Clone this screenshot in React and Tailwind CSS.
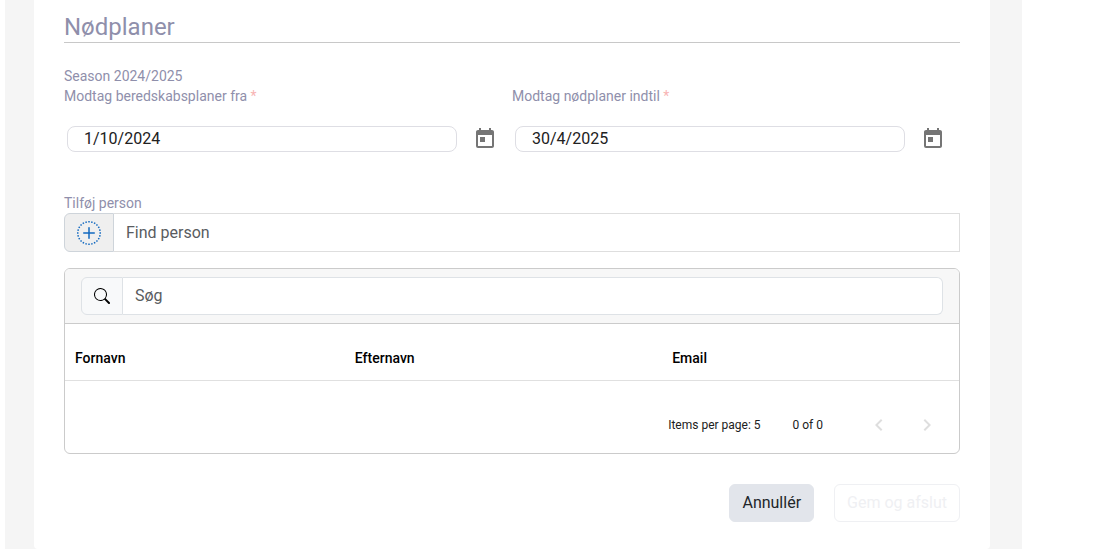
import React, { useState } from "react";
import { BsPlusCircleDotted, BsSearch } from "react-icons/bs";
import { MdChevronLeft, MdChevronRight, MdToday } from "react-icons/md";

const DateField = ({ id, label, value, onChange }) => (
  <div>
    <label htmlFor={id} className="block text-sm leading-5 text-[#8f8fab]">
      {label} <span className="text-[#f8b4b4]">*</span>
    </label>
    <div className="mt-[9px] flex h-12 items-center gap-1 px-[3px]">
      <input
        id={id}
        type="text"
        value={value}
        onChange={(e) => onChange(e.target.value)}
        className="h-[26px] min-w-0 flex-1 rounded-lg border border-[#dedee4] bg-white px-4 pb-0.5 text-base text-[#212121] outline-none"
        required
      />
      <button
        type="button"
        aria-label="Open calendar"
        className="flex size-12 items-center justify-center text-[#757575]"
      >
        <MdToday size={24} />
      </button>
    </div>
  </div>
);

const App = () => {
  const [dates, setDates] = useState({ from: "1/10/2024", to: "30/4/2025" });
  const [person, setPerson] = useState("");
  const [search, setSearch] = useState("");

  return (
    <div className="bg-white pr-[88px] pl-[5px] font-[Roboto,sans-serif]">
      <div className="bg-[#f5f5f5] pr-8 pl-[29px]">
        <main className="rounded-b bg-white px-[30px] pt-3 pb-[27px]">
          <h1 className="border-b border-[#c8c8c8] text-2xl leading-[30px] text-[#8f8fab]">
            Nødplaner
          </h1>

          <form onSubmit={(e) => e.preventDefault()}>
            <p className="mt-[23px] text-sm leading-5 text-[#8f8fab]">
              Season 2024/2025
            </p>
            <div className="grid grid-cols-2">
              <DateField
                id="from"
                label="Modtag beredskabsplaner fra"
                value={dates.from}
                onChange={(from) => setDates({ ...dates, from })}
              />
              <DateField
                id="to"
                label="Modtag nødplaner indtil"
                value={dates.to}
                onChange={(to) => setDates({ ...dates, to })}
              />
            </div>

            {/* Add person */}
            <label
              htmlFor="person"
              className="mt-[30px] block text-sm leading-5 text-[#8f8fab]"
            >
              Tilføj person
            </label>
            <div className="flex h-[39px]">
              <button
                type="button"
                aria-label="Tilføj person"
                className="flex w-[50px] items-center justify-center rounded-l-md border border-[#ced4da] bg-[#efefef] text-[#1269c0]"
              >
                <BsPlusCircleDotted size={24} />
              </button>
              <input
                id="person"
                type="text"
                value={person}
                onChange={(e) => setPerson(e.target.value)}
                placeholder="Find person"
                className="min-w-0 flex-1 border border-l-0 border-[#dedede] px-3 text-base outline-none placeholder:text-[#595c5f]"
              />
            </div>

            {/* Persons */}
            <section className="mt-4 overflow-hidden rounded-md border border-[#cbcbcb]">
              <div className="border-b border-[#cbcbcb] bg-[#f7f7f7] px-4 py-2">
                <div className="flex h-[38px]">
                  <label
                    htmlFor="search"
                    aria-label="Søg"
                    className="flex w-[42px] items-center justify-center rounded-l-md border border-[#dee2e6] bg-[#f8f9fa] text-black"
                  >
                    <BsSearch size={16} />
                  </label>
                  <input
                    id="search"
                    type="text"
                    value={search}
                    onChange={(e) => setSearch(e.target.value)}
                    placeholder="Søg"
                    className="min-w-0 flex-1 rounded-r-md border border-l-0 border-[#dee2e6] bg-white px-3 text-base outline-none placeholder:text-[#595c5f]"
                  />
                </div>
              </div>
              <table className="w-full table-fixed text-left text-sm">
                <thead>
                  <tr className="h-14 border-b border-[#e0e0e0]">
                    <th className="w-[31.3%] px-2.5 pt-3 font-medium">Fornavn</th>
                    <th className="w-[35.5%] px-2.5 pt-3 font-medium">Efternavn</th>
                    <th className="px-2.5 pt-3 font-medium">Email</th>
                  </tr>
                </thead>
                <tbody></tbody>
              </table>
              <div className="flex items-center justify-end pt-5 pr-2 pb-1 text-xs text-[#212121]">
                <span>Items per page: 5</span>
                <span className="mx-8">0 of 0</span>
                <button
                  type="button"
                  aria-label="Previous page"
                  className="flex size-12 items-center justify-center text-[#dedede]"
                  disabled
                >
                  <MdChevronLeft size={24} />
                </button>
                <button
                  type="button"
                  aria-label="Next page"
                  className="flex size-12 items-center justify-center text-[#dedede]"
                  disabled
                >
                  <MdChevronRight size={24} />
                </button>
              </div>
            </section>

            <div className="mt-[30px] flex justify-end gap-5">
              <button
                type="button"
                className="h-[38px] rounded-md border border-[#e2e5eb] bg-[#e2e5eb] px-3 text-base text-[#212529]"
              >
                Annullér
              </button>
              <button
                type="submit"
                className="h-[38px] rounded-md border border-[#eff0f3] bg-white px-3 text-base text-[#eff0f3]"
                disabled
              >
                Gem og afslut
              </button>
            </div>
          </form>
        </main>
      </div>
    </div>
  );
};

export default App;
